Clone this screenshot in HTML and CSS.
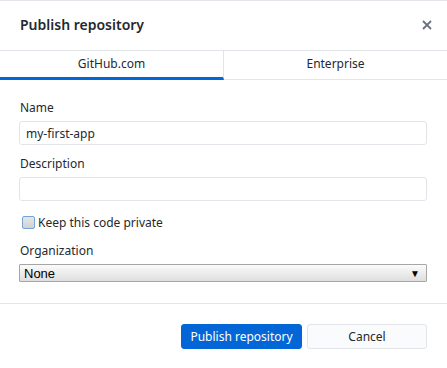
FILE: index.html
```html
<!DOCTYPE html>
<html lang="en">
<head>
  <meta charset="UTF-8"/>
  <title>Publish repository</title>
  <link rel="stylesheet" href="styles.css">
</head>
<body>

  <div class="dialog">
    <!-- header -->
    <div class="dialog-header">
      <h1>Publish repository</h1>
      <button class="close" aria-label="Close">
        <svg width="10" height="10" viewBox="0 0 10 10">
          <path d="M1 1 L9 9 M9 1 L1 9" stroke="#6a737d" stroke-width="1.8" fill="none"/>
        </svg>
      </button>
    </div>

    <!-- tabs -->
    <div class="tabs">
      <div class="tab selected">GitHub.com</div>
      <div class="tab">Enterprise</div>
    </div>

    <!-- form -->
    <div class="form">
      <div class="field">
        <label>Name</label>
        <input type="text" value="my-first-app">
      </div>
      <div class="field">
        <label>Description</label>
        <input type="text" value="">
      </div>
      <label class="checkbox">
        <span class="box"></span>
        Keep this code private
      </label>
      <div class="field">
        <label>Organization</label>
        <div class="select">None</div>
      </div>
    </div>

    <!-- footer -->
    <div class="dialog-footer">
      <button class="btn primary">Publish repository</button>
      <button class="btn">Cancel</button>
    </div>
  </div>

</body>
</html>
```

FILE: styles.css
```css
body {
  margin: 0;
  background-color: #fff;
  font-family: "Noto Sans", sans-serif;
  color: #24292e;
}
.dialog {
  border-top: 1px solid #e1e4e8;
  height: 367px;
  display: flex;
  flex-direction: column;
}
.dialog-header {
  height: 49px;
  display: flex;
  align-items: center;
  justify-content: space-between;
  padding: 0 15px 0 20px;
  border-bottom: 1px solid #e1e4e8;
}
.dialog-header h1 {
  font-size: 14px;
  font-weight: 600;
  margin: 0;
  margin-top: -2px;
}
.close {
  border: none;
  background: none;
  padding: 0;
  width: 10px;
  height: 10px;
  display: flex;
  margin-top: -1px;
}
.tabs {
  display: flex;
  height: 28px;
  border-bottom: 1px solid #e1e4e8;
}
.tab {
  flex: 1;
  text-align: center;
  font-size: 12px;
  line-height: 26px;
  border-bottom: 3px solid transparent;
  margin-bottom: -1px;
}
.tab.selected {
  border-bottom-color: #0366d6;
  border-right: 1px solid #e1e4e8;
}
.form {
  flex: 1;
  padding: 19px 20px 0 19px;
  display: flex;
  flex-direction: column;
  gap: 10px;
  border-bottom: 1px solid #e1e4e8;
}
.field {
  display: flex;
  flex-direction: column;
}
.field label {
  font-size: 12px;
  line-height: 17px;
  margin-bottom: 5px;
  padding-left: 1px;
}
.field input {
  height: 24px;
  box-sizing: border-box;
  border: 1px solid #e1e4e8;
  border-radius: 3px;
  font-family: inherit;
  font-size: 12px;
  color: #24292e;
  padding: 0 6px;
  outline: none;
}
.checkbox {
  display: flex;
  align-items: center;
  gap: 3px;
  font-size: 12px;
  padding-left: 3px;
  height: 16px;
  margin: 3px 0 2px;
}
.checkbox .box {
  width: 11px;
  height: 11px;
  border: 1px solid #74a3da;
  border-radius: 2px;
  background: linear-gradient(#e6e6e6, #d2d2d2);
}
.select {
  position: relative;
  height: 18px;
  line-height: 17px;
  box-sizing: border-box;
  border: 1px solid #a6a6a6;
  border-radius: 1px;
  background: linear-gradient(#fbfbfb, #dedede);
  font-family: "Liberation Sans", Arial, sans-serif;
  font-size: 13px;
  padding-left: 4px;
  color: #000;
}
.select::after {
  content: "\25BC";
  position: absolute;
  right: 6px;
  top: 0;
  font-size: 10px;
}
.dialog-footer {
  height: 64px;
  display: flex;
  justify-content: flex-end;
  align-items: flex-start;
  gap: 5px;
  padding: 20px 20px 0 0;
  box-sizing: border-box;
}
.btn {
  height: 25px;
  width: 120px;
  border: 1px solid #e1e4e8;
  border-radius: 3px;
  background-color: #fafbfc;
  font-family: inherit;
  font-size: 12px;
  color: #24292e;
  cursor: pointer;
}
.btn.primary {
  width: 121px;
  background-color: #0366d6;
  border-color: #0366d6;
  color: #fff;
}
```
